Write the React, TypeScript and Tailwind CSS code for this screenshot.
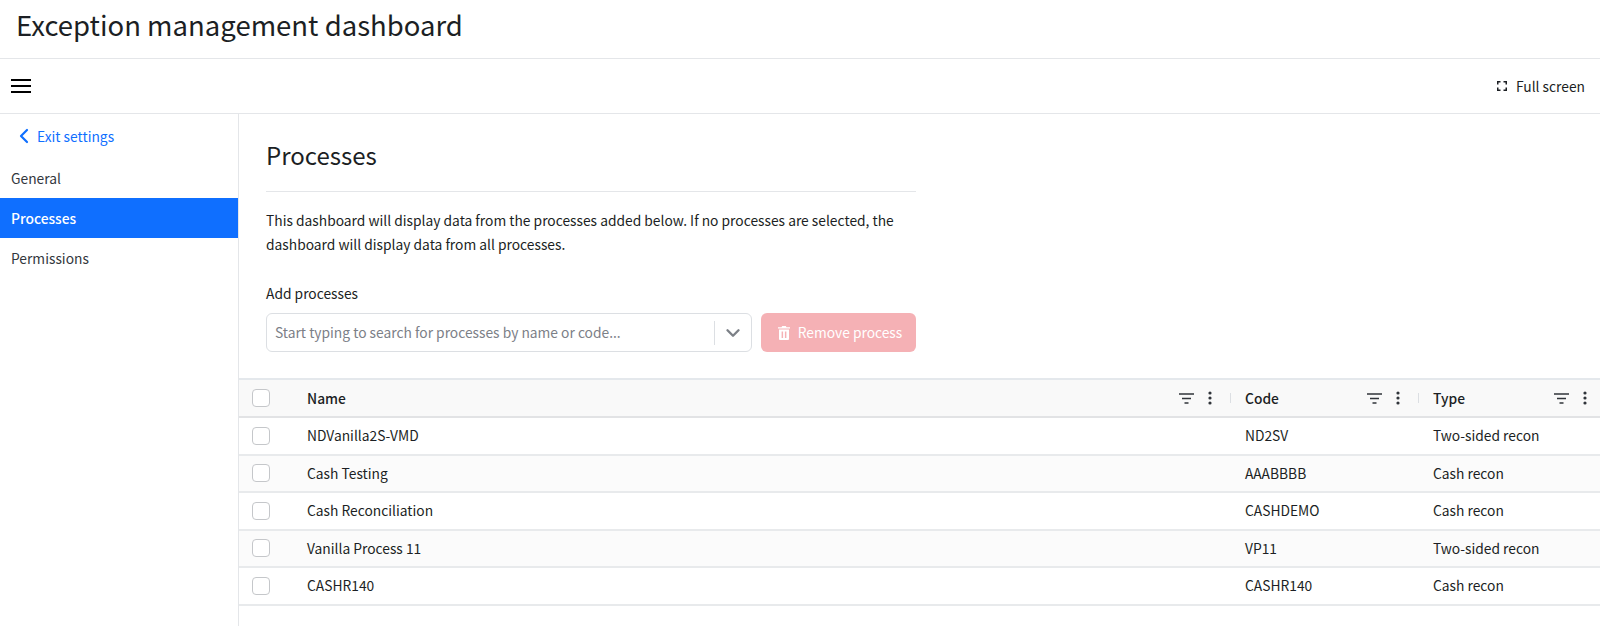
import React from 'react';
import { ChevronDown, ChevronLeft } from 'lucide-react';

const rows = [
  { name: 'NDVanilla2S-VMD', code: 'ND2SV', type: 'Two-sided recon' },
  { name: 'Cash Testing', code: 'AAABBBB', type: 'Cash recon' },
  { name: 'Cash Reconciliation', code: 'CASHDEMO', type: 'Cash recon' },
  { name: 'Vanilla Process 11', code: 'VP11', type: 'Two-sided recon' },
  { name: 'CASHR140', code: 'CASHR140', type: 'Cash recon' },
];

const Checkbox = () => (
  <div className="w-[18px] h-[18px] rounded-[4px] border border-[#c5c7ca] bg-white shrink-0" />
);

const HeaderTools = () => (
  <div className="flex items-center gap-[14px] text-[#30343a]">
    <svg width="15" height="11" viewBox="0 0 15 11" fill="none" stroke="currentColor" strokeWidth="1.5">
      <path d="M0 1h15M3 5.5h9M5.5 10h4" />
    </svg>
    <svg width="4" height="14" viewBox="0 0 4 14" fill="currentColor">
      <circle cx="2" cy="2" r="1.6" />
      <circle cx="2" cy="7" r="1.6" />
      <circle cx="2" cy="12" r="1.6" />
    </svg>
  </div>
);

const MenuIcon = () => (
  <svg width="20" height="14" viewBox="0 0 20 14" fill="none" stroke="#000" strokeWidth="1.8">
    <path d="M0 1h20M0 7h20M0 13h20" />
  </svg>
);

const FullScreenIcon = () => (
  <svg width="10" height="10" viewBox="0 0 10 10" fill="none" stroke="#1c1f24" strokeWidth="1.5">
    <path d="M.75 3.5V.75H3.5M6.5.75h2.75V3.5M9.25 6.5v2.75H6.5M3.5 9.25H.75V6.5" />
  </svg>
);

const TrashIcon = () => (
  <svg width="12" height="14" viewBox="0 0 12 14" fill="#fff">
    <path d="M0 1.200h3.500L4.200 0h3.600l.7 1.200H12v1.300H0z" />
    <path fillRule="evenodd" d="M1 3.500h10V13a1 1 0 0 1-1 1H2a1 1 0 0 1-1-1zM3.600 5.500v6.500h1.500V5.500zm3.300 0v6.500h1.500V5.500z" />
  </svg>
);

export default function App() {
  return (
    <div className="w-[1600px] h-[626px] overflow-hidden bg-white text-[#1c1f24] font-['Noto_Sans_CJK_SC',sans-serif]">
      <div className="h-[59px] border-b border-[#e4e6e9] pl-4 flex items-center">
        <h1 className="text-[27.5px] leading-none pb-[9px]">Exception management dashboard</h1>
      </div>

      <div className="h-[55px] border-b border-[#e4e6e9] pl-[11px] pr-[15px] flex items-center justify-between">
        <MenuIcon />
        <div className="flex items-center gap-[9px] text-[13.8px]">
          <FullScreenIcon />
          Full screen
        </div>
      </div>

      <div className="flex h-[512px]">
        <aside className="w-[239px] shrink-0 border-r border-[#e4e6e9] text-[13.8px]">
          <div className="h-[44px] pl-[12px] flex items-center gap-[1px] text-[#0f6fff]">
            <ChevronLeft size={24} strokeWidth={2.2} />
            Exit settings
          </div>
          <div className="h-[40px] pl-[11px] flex items-center text-[#33373d]">General</div>
          <div className="h-[40px] pl-[11px] flex items-center font-medium text-white bg-[#0f6fff]">Processes</div>
          <div className="h-[41px] pl-[11px] flex items-center text-[#33373d]">Permissions</div>
        </aside>

        <main className="flex-1 min-w-0 text-[13.8px]">
          <div className="pl-[27px] pt-[23px]">
            <div className="w-[650px]">
              <h2 className="text-[24px] leading-[36px] pb-[18px] border-b border-[#e4e6e9]">Processes</h2>
              <p className="mt-[16px] leading-[24px]">
                This dashboard will display data from the processes added below. If no processes are selected, the
                dashboard will display data from all processes.
              </p>
              <div className="mt-[25px] leading-[24px]">Add processes</div>
              <div className="mt-[8px] flex gap-[9px]">
                <div className="w-[486px] h-[39px] rounded-[6px] border border-[#dcdfe3] flex items-center">
                  <span className="flex-1 pl-[8px] text-[#7c8087]">
                    Start typing to search for processes by name or code...
                  </span>
                  <div className="w-px h-[24px] bg-[#dcdfe3]" />
                  <div className="w-[36px] flex justify-center text-[#7c8087]">
                    <ChevronDown size={22} strokeWidth={2.6} />
                  </div>
                </div>
                <div className="w-[155px] h-[39px] pl-[3px] rounded-[6px] bg-[#f5b1b5] text-white flex items-center justify-center gap-[8px]">
                  <TrashIcon />
                  Remove process
                </div>
              </div>
            </div>
          </div>

          <div className="mt-[26px] border-t-2 border-[#e4e8ec]">
            <div className="h-[38px] bg-[#f9f9f9] border-b-2 border-[#e2e3e5] flex items-center font-medium">
              <div className="w-[68px] pl-[13px]"><Checkbox /></div>
              <div className="flex-1 flex items-center justify-between pr-[18px]">
                Name
                <HeaderTools />
              </div>
              <div className="w-px h-[10px] bg-[#dcdfe3]" />
              <div className="w-[187px] pl-[14px] flex items-center justify-between pr-[18px]">
                Code
                <HeaderTools />
              </div>
              <div className="w-px h-[10px] bg-[#dcdfe3]" />
              <div className="w-[181px] pl-[14px] flex items-center justify-between pr-[13px]">
                Type
                <HeaderTools />
              </div>
            </div>
            {rows.map((row, i) => (
              <div
                key={row.code}
                className={`h-[37.5px] border-b-2 border-[#e8eaec] flex items-center ${i % 2 === 1 ? 'bg-[#fbfbfb]' : 'bg-white'}`}
              >
                <div className="w-[68px] pl-[13px]"><Checkbox /></div>
                <div className="flex-1">{row.name}</div>
                <div className="w-[188px] pl-[15px]">{row.code}</div>
                <div className="w-[182px] pl-[15px]">{row.type}</div>
              </div>
            ))}
          </div>
        </main>
      </div>
    </div>
  );
}
